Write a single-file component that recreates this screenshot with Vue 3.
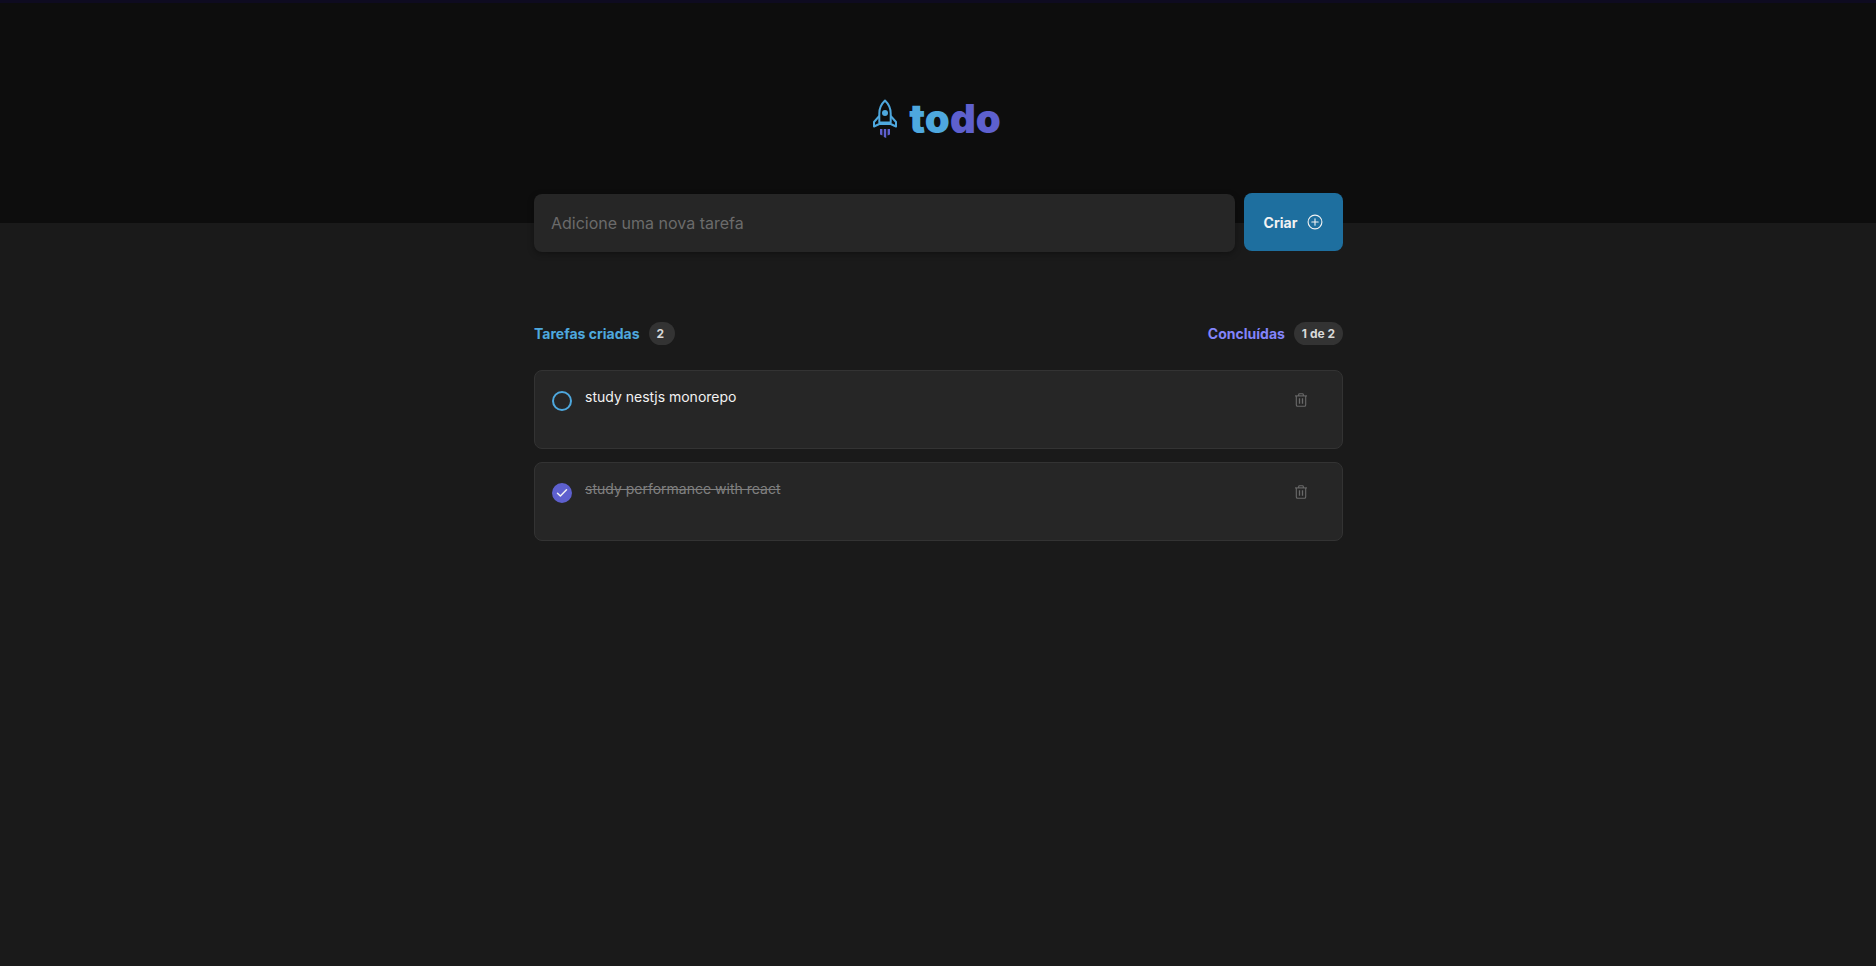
<script setup>
const tasks = [
  { id: 1, text: 'study nestjs monorepo', done: false },
  { id: 2, text: 'study performance with react', done: true },
]
</script>

<template>
  <div class="page">
    <header class="head">
      <div class="logo">
        <svg class="rocket" width="26" height="40" viewBox="0 0 26 40" fill="none">
          <path d="M13 1.5C8.8 5.5 7.3 10 7.3 14.5V23.5H18.7V14.5C18.7 10 17.2 5.5 13 1.5Z" stroke="#4ea8de" stroke-width="2" stroke-linejoin="round"/>
          <path d="M7.3 17L2 23V27.5L7.3 25H18.7L24 27.5V23L18.7 17" stroke="#4ea8de" stroke-width="2" stroke-linejoin="round"/>
          <circle cx="13" cy="14" r="3" fill="#4ea8de"/>
          <path d="M8 30H10.4V36.5L8 35.5ZM11.8 30H14.2V39L11.8 38ZM15.6 30H18V35.5L15.6 36.5Z" fill="#5e60ce"/>
        </svg>
        <span class="word"><span class="to">to</span><span class="do">do</span></span>
      </div>
    </header>

    <main class="main">
      <form class="new" @submit.prevent>
        <input class="field" type="text" placeholder="Adicione uma nova tarefa" />
        <button class="create" type="submit">
          Criar
          <svg width="16" height="16" viewBox="0 0 16 16" fill="none" stroke="#f2f2f2" stroke-width="1.1">
            <circle cx="8" cy="8" r="6.9"/>
            <path d="M8 4.8V11.2M4.8 8H11.2" stroke-linecap="round"/>
          </svg>
        </button>
      </form>

      <div class="stats">
        <div class="stat">
          <span class="created">Tarefas criadas</span>
          <span class="pill">2</span>
        </div>
        <div class="stat">
          <span class="finished">Concluídas</span>
          <span class="pill">1 de 2</span>
        </div>
      </div>

      <ul class="list">
        <li v-for="t in tasks" :key="t.id" class="card">
          <span class="check" :class="{ on: t.done }">
            <svg v-if="t.done" width="12" height="10" viewBox="0 0 12 10" fill="none">
              <path d="M1.5 5.2L4.4 8L10.5 1.8" stroke="#f2f2f2" stroke-width="1.5" stroke-linecap="round" stroke-linejoin="round"/>
            </svg>
          </span>
          <p class="text" :class="{ done: t.done }">{{ t.text }}</p>
          <svg class="trash" width="14" height="14" viewBox="0 0 14 14" fill="none" stroke="#6a6a6a" stroke-width="1.1">
            <path d="M1 2.9H13"/>
            <path d="M4.7 2.9V1.6C4.7 1 5 .7 5.6.7H8.4C9 .7 9.3 1 9.3 1.6V2.9"/>
            <path d="M2.3 2.9V12C2.3 12.8 2.8 13.3 3.6 13.3H10.4C11.2 13.3 11.7 12.8 11.7 12V2.9"/>
            <path d="M5.5 5.3V10.8M8.5 5.3V10.8" stroke-width="1.3"/>
          </svg>
        </li>
      </ul>
    </main>
  </div>
</template>

<style>
html, body { margin: 0; background: #1a1a1a; }
</style>

<style scoped>
.page {
  height: 966px;
  overflow: hidden;
  background: #1a1a1a;
  font-family: Inter, "Liberation Sans", sans-serif;
  color: #f2f2f2;
}
.head {
  box-sizing: border-box;
  height: 223px;
  padding-top: 92px;
  background: #0d0d0d;
  border-top: 3px solid #0e0b20;
  display: flex;
  justify-content: center;
  align-items: flex-start;
}
.logo { display: flex; align-items: center; gap: 11px; margin-left: -3px; }
.rocket { display: block; }
.word { font-size: 40px; font-weight: 900; line-height: 48px; letter-spacing: 0; }
.to { color: #4ea8de; }
.do { color: #5e60ce; }
.main { width: 809px; margin: -30px 0 0 534px; }
.new { display: flex; gap: 9px; align-items: flex-start; }
.field {
  box-sizing: border-box;
  flex: 1;
  height: 58px;
  margin-top: 1px;
  padding: 0 17px;
  border: 0;
  border-radius: 8px;
  background: #262626;
  box-shadow: 0 2px 6px rgba(0, 0, 0, .35);
  color: #f2f2f2;
  font: 400 16px Inter, "Liberation Sans", sans-serif;
  outline: none;
}
.field::placeholder { color: #6b6b6b; opacity: 1; }
.create {
  width: 99px;
  height: 58px;
  border: 0;
  border-radius: 8px;
  background: #1e6f9f;
  color: #f2f2f2;
  font: 700 14px Inter, "Liberation Sans", sans-serif;
  display: flex;
  align-items: center;
  justify-content: center;
  gap: 10px;
}
.stats { display: flex; justify-content: space-between; margin-top: 70px; }
.stat { display: flex; align-items: center; gap: 9px; font-size: 14px; font-weight: 700; line-height: 23px; }
.created { color: #4ea8de; }
.finished { color: #8284fa; }
.pill {
  min-width: 10px;
  padding: 0 8px;
  border-radius: 12px;
  background: #333;
  color: #d9d9d9;
  font-size: 12px;
  line-height: 23px;
}
.list { list-style: none; margin: 25px 0 0; padding: 0; display: flex; flex-direction: column; gap: 13px; }
.card {
  box-sizing: border-box;
  height: 79px;
  padding: 16px 17px;
  display: flex;
  align-items: flex-start;
  background: #262626;
  border: 1px solid #333;
  border-radius: 8px;
}
.check {
  box-sizing: border-box;
  flex: none;
  width: 20px;
  height: 20px;
  margin: 4px 13px 0 0;
  border: 2px solid #4ea8de;
  border-radius: 50%;
  display: flex;
  align-items: center;
  justify-content: center;
}
.check.on { background: #5e60ce; border-color: #5e60ce; }
.text { flex: 1; margin: 0; font-size: 14px; line-height: 20px; color: #f2f2f2; }
.text.done { color: #808080; text-decoration: line-through; }
.trash { margin: 6px 17px 0 0; }
</style>
